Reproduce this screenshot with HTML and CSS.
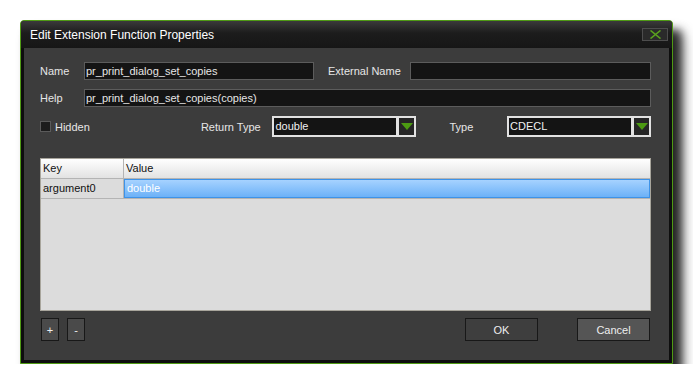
FILE: index.html
```html
<!DOCTYPE html>
<html lang="en">
<head>
    <meta charset="UTF-8">
    <meta name="viewport" content="width=device-width, initial-scale=1.0">
    <title>Edit Extension Function Properties</title>
    <link rel="stylesheet" href="styles.css">
</head>
<body>

    <div class="dialog">
        <div class="titlebar">
            <span class="title">Edit Extension Function Properties</span>
            <button class="close-btn">
                <svg width="13" height="9" viewBox="0 0 13 9"><path d="M1.5 0.5 L11.5 8.5 M11.5 0.5 L1.5 8.5" stroke="#5aa01e" stroke-width="1.6"/></svg>
            </button>
        </div>

        <div class="body">
            <div class="row">
                <label class="lbl">Name</label>
                <div class="field name-field">pr_print_dialog_set_copies</div>
                <label class="lbl ext-lbl">External Name</label>
                <div class="field grow"></div>
            </div>

            <div class="row">
                <label class="lbl">Help</label>
                <div class="field grow">pr_print_dialog_set_copies(copies)</div>
            </div>

            <div class="row options">
                <span class="check"></span>
                <span class="check-lbl">Hidden</span>
                <label class="ret-lbl">Return Type</label>
                <div class="select">
                    <span class="select-text">double</span>
                    <span class="arrow"></span>
                </div>
                <label class="type-lbl">Type</label>
                <div class="select">
                    <span class="select-text">CDECL</span>
                    <span class="arrow"></span>
                </div>
            </div>

            <div class="table">
                <div class="thead">
                    <div class="cell key">Key</div>
                    <div class="cell val">Value</div>
                </div>
                <div class="trow">
                    <div class="cell key">argument0</div>
                    <div class="cell val selected">double</div>
                </div>
            </div>

            <div class="footer">
                <button class="btn small">+</button>
                <button class="btn small">-</button>
                <span class="spacer"></span>
                <button class="btn wide">OK</button>
                <button class="btn wide cancel">Cancel</button>
            </div>
        </div>
    </div>

</body>
</html>
```

FILE: styles.css
```css
body {
    margin: 0;
    padding: 20px 0 0 20px;
    background: #ffffff;
    font-family: 'Liberation Sans', Arial, sans-serif;
    font-size: 11px;
    color: #e6e6e6;
}
.dialog {
    width: 645px;
    height: 339px;
    border: 1px solid #4f9a14;
    border-radius: 4px 4px 0 0;
    background: #0e0e0e;
    padding: 0 3px 3px 3px;
    box-shadow: 8px 10px 8px rgba(0, 0, 0, 0.75), 10px 13px 14px rgba(0, 0, 0, 0.45);
    display: flex;
    flex-direction: column;
}
.titlebar {
    height: 27px;
    margin: 0 -3px;
    padding: 0 4px 0 9px;
    display: flex;
    align-items: center;
    justify-content: space-between;
    background: linear-gradient(#3a3a3a, #1c1c1c 45%, #161616);
    border-radius: 3px 3px 0 0;
}
.title {
    color: #ffffff;
    font-size: 12px;
    padding-top: 1px;
}
.close-btn {
    width: 26px;
    height: 13px;
    padding: 0;
    border: 1px solid #4d4d4d;
    background: #2a2a2a;
    display: flex;
    align-items: center;
    justify-content: center;
}
.body {
    flex: 1;
    background: #3c3c3c;
    padding: 14px 18px 0 16px;
    display: flex;
    flex-direction: column;
}
.row {
    display: flex;
    align-items: center;
    height: 18px;
    margin-bottom: 9px;
}
.lbl {
    width: 44px;
}
.field {
    height: 16px;
    line-height: 16px;
    border: 1px solid #5c5c5c;
    background: #141414;
    padding: 0 1px;
    white-space: nowrap;
}
.name-field {
    width: 226px;
}
.ext-lbl {
    width: auto;
    margin: 0 9px 0 14px;
}
.grow {
    flex: 1;
}
.options {
    height: 21px;
    margin-bottom: 21px;
}
.check {
    width: 9px;
    height: 9px;
    border: 1px solid #5a5a5a;
    background: #1c1c1c;
    margin-right: 4px;
}
.check-lbl {
    width: 147px;
}
.ret-lbl {
    width: 72px;
}
.type-lbl {
    width: 91px;
    padding-left: 33px;
    box-sizing: border-box;
}
.select {
    width: 141px;
    height: 17px;
    border: 2px solid #e2e2e2;
    background: #e2e2e2;
    display: flex;
}
.select-text {
    flex: 1;
    background: #141414;
    color: #f0f0f0;
    line-height: 17px;
    padding-left: 1px;
    margin-right: 3px;
}
.arrow {
    width: 15px;
    background: #262626;
    position: relative;
}
.arrow::after {
    content: "";
    position: absolute;
    left: 2px;
    top: 5px;
    border-left: 6px solid transparent;
    border-right: 6px solid transparent;
    border-top: 7px solid #4c9a12;
}
.table {
    height: 151px;
    border: 1px solid #a8a59c;
    background: #dcdcdc;
    color: #111111;
}
.thead, .trow {
    display: flex;
    height: 19px;
    border-bottom: 1px solid #b4b4b4;
}
.thead {
    background: linear-gradient(#ffffff, #e2e2e2);
}
.cell {
    line-height: 19px;
    padding-left: 2px;
}
.key {
    width: 80px;
    border-right: 1px solid #b4b4b4;
}
.val {
    flex: 1;
}
.selected {
    background: linear-gradient(#a6d2ff, #6cb1f7);
    border: 1px solid #3e93e8;
    color: #ffffff;
    line-height: 17px;
}
.footer {
    display: flex;
    margin-top: 7px;
    padding-left: 1px;
}
.btn {
    height: 23px;
    border: 1px solid #181818;
    background: #3e3e3e;
    color: #eeeeee;
    font-family: 'Liberation Sans', Arial, sans-serif;
    font-size: 11px;
    padding: 0;
}
.small {
    width: 18px;
    margin-right: 8px;
    background: #4a4a4a;
}
.spacer {
    flex: 1;
}
.wide {
    width: 73px;
}
.cancel {
    margin-left: 39px;
    background: #555555;
    margin-right: 1px;
}
```
